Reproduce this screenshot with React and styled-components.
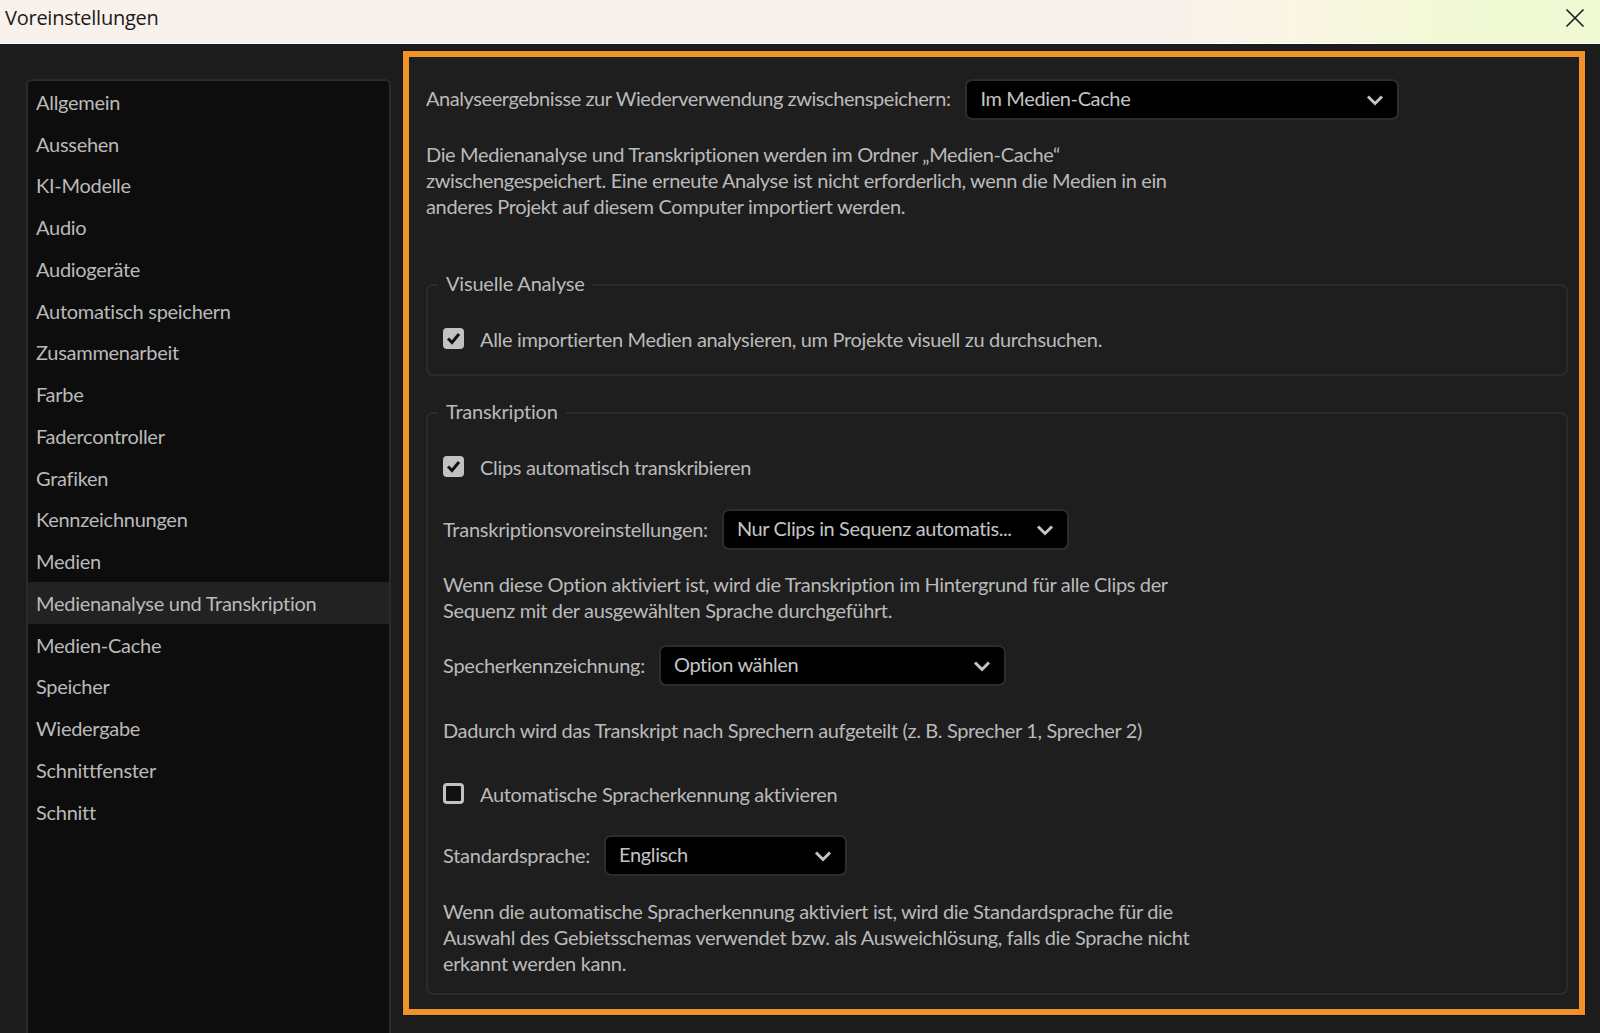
import React from "react";
import styled, { createGlobalStyle } from "styled-components";

const GlobalStyle = createGlobalStyle`
  html, body {
    margin: 0;
    padding: 0;
    height: 100%;
    background: #1c1c1c;
  }
  * {
    box-sizing: border-box;
  }
`;

const Window = styled.div`
  width: 1600px;
  height: 1033px;
  overflow: hidden;
  display: flex;
  flex-direction: column;
  background: #1c1c1c;
  font-family: "Lato", "Liberation Sans", sans-serif;
  font-size: 20px;
  color: #bababa;
`;

const TitleBar = styled.div`
  flex: 0 0 44px;
  display: flex;
  align-items: center;
  justify-content: space-between;
  padding: 0 15px 0 5px;
  background: linear-gradient(90deg, #f8f1ec 0%, #f8f1ec 72%, #fbf5e6 80%, #f3f9d6 90%, #eff9d3 100%);
  border-bottom: 1px solid #fff;
`;

const WindowTitle = styled.span`
  padding-bottom: 8px;
  font-family: "Open Sans", "Liberation Sans", sans-serif;
  font-size: 20px;
  letter-spacing: -0.25px;
  color: #1a1a1a;
`;

const Body = styled.div`
  flex: 1;
  min-height: 0;
  display: flex;
  align-items: flex-start;
  padding: 7px 15px 0 26px;
  gap: 12px;
`;

const Sidebar = styled.nav`
  flex: 0 0 365px;
  height: 1000px;
  margin-top: 28px;
  background: #0d0d0d;
  border: 2px solid #2a2a2a;
  border-radius: 6px;
  display: flex;
  flex-direction: column;
`;

const NavItem = styled.div`
  height: 41.75px;
  display: flex;
  align-items: center;
  padding-left: 8px;
  letter-spacing: -0.28px;
  background: ${({ $active }) => ($active ? "#222222" : "transparent")};
`;

const Panel = styled.main`
  flex: 0 0 1182px;
  height: 964px;
  padding: 22px 11px 0 17px;
  background: #1e1e1e;
  border: 6px solid #f0922a;
  box-shadow: 0 0 0 1px #141414;
`;

const Row = styled.div`
  display: flex;
  align-items: center;
  gap: ${({ $gap }) => $gap || 14}px;
  margin-top: ${({ $top }) => $top || 0}px;
`;

const FieldLabel = styled.span`
  padding-bottom: ${({ $tight }) => ($tight ? 4 : 2)}px;
  letter-spacing: ${({ $tight }) => ($tight ? "-0.43px" : "-0.25px")};
`;

const SelectBox = styled.div`
  width: ${({ $width }) => $width}px;
  height: 41px;
  display: flex;
  align-items: center;
  justify-content: space-between;
  padding: 0 13px;
  background: #000;
  border: 2px solid #2c2c2c;
  border-radius: 7px;
  color: #c4c4c4;
`;

const SelectValue = styled.span`
  padding-bottom: 3px;
  letter-spacing: -0.38px;
`;

const HelpText = styled.p`
  margin: ${({ $top }) => $top || 0}px 0 0;
  line-height: 26px;
  letter-spacing: -0.36px;
`;

const Group = styled.fieldset`
  margin: ${({ $top }) => $top}px 0 0;
  padding: 0 15px;
  height: ${({ $height }) => $height}px;
  border: 2px solid #2b2b2b;
  border-radius: 7px;
`;

const GroupTitle = styled.legend`
  margin-left: -5px;
  padding: 0 8px;
  line-height: 26px;
  letter-spacing: -0.2px;
  transform: translateY(-2px);
`;

const CheckRow = styled.label`
  display: flex;
  align-items: center;
  gap: 16px;
  margin-top: ${({ $top }) => $top}px;
  letter-spacing: -0.33px;
`;

const CheckBox = styled.span`
  flex: 0 0 21px;
  height: 21px;
  margin-bottom: 2px;
  display: flex;
  align-items: center;
  justify-content: center;
  border-radius: 4px;
  background: ${({ $checked }) => ($checked ? "#c2c2c2" : "#111")};
  border: ${({ $checked }) => ($checked ? "none" : "3px solid #c2c2c2")};
`;

const Chevron = () => (
  <svg width="18" height="12" viewBox="0 0 18 12" fill="none">
    <path d="M2 2.5 L9 9.5 L16 2.5" stroke="#c4c4c4" strokeWidth="3" />
  </svg>
);

const Tick = () => (
  <svg width="15" height="13" viewBox="0 0 15 13" fill="none">
    <path d="M2 6.5 L6 10.5 L13 2" stroke="#111" strokeWidth="3" />
  </svg>
);

const CloseIcon = () => (
  <svg width="20" height="20" viewBox="0 0 20 20" fill="none" style={{ marginBottom: 8 }}>
    <path d="M1.5 1.5 L18.5 18.5 M18.5 1.5 L1.5 18.5" stroke="#1a1a1a" strokeWidth="1.6" />
  </svg>
);

const navItems = [
  "Allgemein",
  "Aussehen",
  "KI-Modelle",
  "Audio",
  "Audiogeräte",
  "Automatisch speichern",
  "Zusammenarbeit",
  "Farbe",
  "Fadercontroller",
  "Grafiken",
  "Kennzeichnungen",
  "Medien",
  "Medienanalyse und Transkription",
  "Medien-Cache",
  "Speicher",
  "Wiedergabe",
  "Schnittfenster",
  "Schnitt",
];

const Select = ({ width, children }) => (
  <SelectBox $width={width}>
    <SelectValue>{children}</SelectValue>
    <Chevron />
  </SelectBox>
);

const App = () => (
  <Window>
    <GlobalStyle />
    <TitleBar>
      <WindowTitle>Voreinstellungen</WindowTitle>
      <CloseIcon />
    </TitleBar>
    <Body>
      <Sidebar>
        {navItems.map((item) => (
          <NavItem key={item} $active={item === "Medienanalyse und Transkription"}>
            {item}
          </NavItem>
        ))}
      </Sidebar>
      <Panel>
        <Row $gap={15}>
          <FieldLabel $tight>Analyseergebnisse zur Wiederverwendung zwischenspeichern:</FieldLabel>
          <Select width={434}>Im Medien-Cache</Select>
        </Row>
        <HelpText $top={21}>
          Die Medienanalyse und Transkriptionen werden im Ordner „Medien-Cache“
          <br />
          zwischengespeichert. Eine erneute Analyse ist nicht erforderlich, wenn die Medien in ein
          <br />
          anderes Projekt auf diesem Computer importiert werden.
        </HelpText>
        <Group $top={53} $height={104}>
          <GroupTitle>Visuelle Analyse</GroupTitle>
          <CheckRow $top={29}>
            <CheckBox $checked>
              <Tick />
            </CheckBox>
            Alle importierten Medien analysieren, um Projekte visuell zu durchsuchen.
          </CheckRow>
        </Group>
        <Group $top={24} $height={595}>
          <GroupTitle>Transkription</GroupTitle>
          <CheckRow $top={29}>
            <CheckBox $checked>
              <Tick />
            </CheckBox>
            Clips automatisch transkribieren
          </CheckRow>
          <Row $top={30}>
            <FieldLabel>Transkriptionsvoreinstellungen:</FieldLabel>
            <Select width={347}>Nur Clips in Sequenz automatis...</Select>
          </Row>
          <HelpText $top={21}>
            Wenn diese Option aktiviert ist, wird die Transkription im Hintergrund für alle Clips der
            <br />
            Sequenz mit der ausgewählten Sprache durchgeführt.
          </HelpText>
          <Row $top={22}>
            <FieldLabel>Specherkennzeichnung:</FieldLabel>
            <Select width={347}>Option wählen</Select>
          </Row>
          <HelpText $top={31}>
            Dadurch wird das Transkript nach Sprechern aufgeteilt (z. B. Sprecher 1, Sprecher 2)
          </HelpText>
          <CheckRow $top={39}>
            <CheckBox />
            Automatische Spracherkennung aktivieren
          </CheckRow>
          <Row $top={29}>
            <FieldLabel>Standardsprache:</FieldLabel>
            <Select width={243}>Englisch</Select>
          </Row>
          <HelpText $top={22}>
            Wenn die automatische Spracherkennung aktiviert ist, wird die Standardsprache für die
            <br />
            Auswahl des Gebietsschemas verwendet bzw. als Ausweichlösung, falls die Sprache nicht
            <br />
            erkannt werden kann.
          </HelpText>
        </Group>
      </Panel>
    </Body>
  </Window>
);

export default App;
